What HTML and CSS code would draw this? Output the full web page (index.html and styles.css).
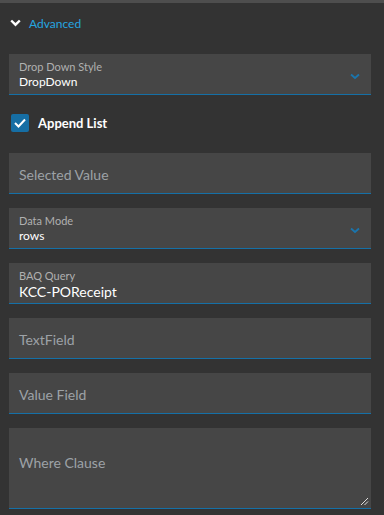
FILE: index.html
```html
<!DOCTYPE html>
<html lang="en">
<head>
    <meta charset="UTF-8">
    <title>Advanced</title>
    <link rel="stylesheet" href="styles.css">
</head>
<body>
    <div id="panel">
        <div class="section-head">
            <svg class="chev" width="11" height="8" viewBox="0 0 11 8"><path d="M1.2 1.5l4.3 4.2 4.3-4.2" fill="none" stroke="#fff" stroke-width="2.4"/></svg>
            <span>Advanced</span>
        </div>

        <div class="fields">
            <div class="field select">
                <label>Drop Down Style</label>
                <div class="value">DropDown</div>
                <svg class="arrow" width="10" height="7" viewBox="0 0 10 7"><path d="M1 1.5l4 3.5 4-3.5" fill="none" stroke="#1a75ad" stroke-width="1.8"/></svg>
            </div>

            <div class="check">
                <span class="box"><svg width="12" height="10" viewBox="0 0 12 10"><path d="M1 5l3.5 3.5L11 1.5" fill="none" stroke="#fff" stroke-width="2"/></svg></span>
                <span>Append List</span>
            </div>

            <div class="field empty"><span class="ph">Selected Value</span></div>

            <div class="field select">
                <label>Data Mode</label>
                <div class="value">rows</div>
                <svg class="arrow" width="10" height="7" viewBox="0 0 10 7"><path d="M1 1.5l4 3.5 4-3.5" fill="none" stroke="#1a75ad" stroke-width="1.8"/></svg>
            </div>

            <div class="field">
                <label>BAQ Query</label>
                <div class="value big">KCC-POReceipt</div>
            </div>

            <div class="field empty"><span class="ph">TextField</span></div>
            <div class="field empty"><span class="ph">Value Field</span></div>

            <div class="field area"><span class="ph">Where Clause</span>
                <svg class="grip" width="9" height="9" viewBox="0 0 9 9"><path d="M8 1L1 8M8 4.5L4.5 8" stroke="#ddd" stroke-width="1"/></svg>
            </div>
        </div>
    </div>
</body>
</html>
```

FILE: styles.css
```css
*{
    margin: 0;
    padding: 0;
    box-sizing: border-box;
}
html, body{
    background: #333333;
    height: 100%;
}
body{
    font-family: Lato, "Open Sans", sans-serif;
    border-top: 3px solid #4e4e4e;
}
#panel{
    padding: 0 13px 0 9px;
}
.section-head{
    display: flex;
    align-items: center;
    height: 40px;
    padding-left: 1px;
    color: #26a6e0;
    font-size: 12px;
}
.section-head .chev{
    margin-right: 8px;
}
.fields{
    display: flex;
    flex-direction: column;
    gap: 14px;
    padding-top: 11px;
}
.field{
    position: relative;
    height: 41px;
    background: #464646;
    border-bottom: 1px solid #1570a7;
    padding: 6px 10px 0;
}
.field label{
    display: block;
    color: #b0b0b0;
    font-size: 11px;
    line-height: 14px;
}
.field .value{
    color: #fff;
    font-size: 12px;
    line-height: 16px;
}
.field .value.big{
    font-size: 14px;
    line-height: 18px;
}
.field .arrow{
    position: absolute;
    right: 11px;
    top: 19px;
}
.field.empty{
    display: flex;
    align-items: center;
    padding-top: 2px;
}
.ph{
    color: #9da2a7;
    font-size: 14px;
}
.field.area{
    height: 81px;
    display: flex;
    align-items: center;
    padding-top: 0;
    padding-bottom: 12px;
}
.field.area .grip{
    position: absolute;
    right: 2px;
    bottom: 2px;
}
.check{
    display: flex;
    align-items: center;
    gap: 9px;
    height: 18px;
    margin: 5px 0 7px 2px;
    color: #fff;
    font-size: 13px;
    font-weight: bold;
}
.check .box{
    width: 18px;
    height: 18px;
    border-radius: 2px;
    background: #166ea4;
    display: flex;
    align-items: center;
    justify-content: center;
}
```
